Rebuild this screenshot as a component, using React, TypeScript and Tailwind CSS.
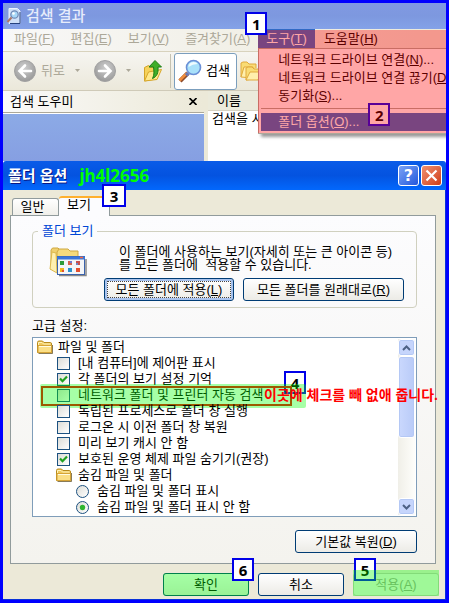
import React from 'react';
import clsx from 'clsx';

interface MenuLabelProps {
  hotkey?: string;
  suffix?: string;
  text: string;
}

interface BadgeProps {
  className: string;
  value: number;
}

interface XpButtonProps {
  children: React.ReactNode;
  className?: string;
  disabled?: boolean;
  focused?: boolean;
}

interface OptionItem {
  checked?: boolean;
  highlight?: boolean;
  text: string;
  type: 'folder' | 'subfolder' | 'checkbox' | 'radio';
}

const disabledMenus = [
  { hotkey: 'F', text: '파일' },
  { hotkey: 'E', text: '편집' },
  { hotkey: 'V', text: '보기' },
  { hotkey: 'A', text: '즐겨찾기' }
];

const toolMenu = [
  { hotkey: 'N', text: '네트워크 드라이브 연결' },
  { hotkey: 'D', text: '네트워크 드라이브 연결 끊기' },
  { hotkey: 'S', text: '동기화' }
];

const options: OptionItem[] = [
  { text: '파일 및 폴더', type: 'folder' },
  { text: '[내 컴퓨터]에 제어판 표시', type: 'checkbox' },
  { checked: true, text: '각 폴더의 보기 설정 기억', type: 'checkbox' },
  { highlight: true, text: '네트워크 폴더 및 프린터 자동 검색', type: 'checkbox' },
  { text: '독립된 프로세스로 폴더 창 실행', type: 'checkbox' },
  { text: '로그온 시 이전 폴더 창 복원', type: 'checkbox' },
  { text: '미리 보기 캐시 안 함', type: 'checkbox' },
  { checked: true, text: '보호된 운영 체제 파일 숨기기(권장)', type: 'checkbox' },
  { text: '숨김 파일 및 폴더', type: 'subfolder' },
  { text: '숨김 파일 및 폴더 표시', type: 'radio' },
  { checked: true, text: '숨김 파일 및 폴더 표시 안 함', type: 'radio' }
];

const MenuLabel = ({ hotkey, suffix = '', text }: MenuLabelProps) => (
  <span>
    {text}
    {hotkey && (
      <>
        (<u>{hotkey}</u>)
      </>
    )}
    {suffix}
  </span>
);

// Numbered step marker
const Badge = ({ className, value }: BadgeProps) => (
  <span
    className={clsx(
      'absolute flex h-[23px] items-center justify-center border-2 border-[#0000e8] bg-white font-["Noto_Sans"] text-[15px] font-bold leading-4 text-black',
      className
    )}
  >
    {value}
  </span>
);

const XpButton = ({ children, className, disabled, focused }: XpButtonProps) => (
  <button
    disabled={disabled}
    className={clsx(
      'relative flex h-[23px] items-center justify-center rounded-[3px] border bg-gradient-to-b whitespace-nowrap',
      disabled
        ? 'border-[#c9c7ba] from-[#f5f4ea] to-[#f5f4ea] text-[#a1a192]'
        : 'border-[#003c74] from-white to-[#ecebe6]',
      focused && 'shadow-[inset_0_0_0_2px_#a9c3ee]',
      className
    )}
  >
    {focused && <span className="absolute inset-[2px] border border-dotted border-[#444]" />}
    {children}
  </button>
);

const FolderIcon = () => (
  <svg className="h-4 w-4 shrink-0" viewBox="0 0 16 16">
    <path d="M1.5 14.5h14V6" fill="none" stroke="#6a5a30" strokeOpacity=".8" />
    <path d="M.5 3.5Q.5 2 2 2h3.5L7 3.5h6.5Q14.5 3.5 14.5 5v8.5H.5z" fill="#f0c95c" stroke="#b88a1c" />
    <path d="M1.500 13V3.500h3.500L6.500 5h7" fill="none" stroke="#fff3b8" />
    <path d="M1 13.500V6.500h13.500v7z" fill="#fbdf86" stroke="#d6a436" />
    <path d="M2 7.500h12" stroke="#fffbe0" />
  </svg>
);

const SearchPageIcon = () => (
  <svg className="h-4 w-4" viewBox="0 0 16 16">
    <path d="M3 .5h8.500L14 3v12.500H3z" fill="#cfe0f8" stroke="#edf3ff" />
    <path d="M14 4v11.500H4" fill="none" stroke="#26427f" />
    <circle cx="8.500" cy="6.500" r="3.700" fill="#a9d8f7" stroke="#7189b5" strokeWidth="1.200" />
    <circle cx="7.500" cy="5.500" r="1.300" fill="#fff" />
    <path d="M5.500 9.500 1.500 14" stroke="#ae7665" strokeWidth="2" />
  </svg>
);

const RoundArrow = ({ flip }: { flip?: boolean }) => (
  <svg className={clsx('h-6 w-6', flip && '-scale-x-100')} viewBox="0 0 24 24">
    <defs>
      <radialGradient id="arrowFill" cx="45%" cy="35%" r="65%">
        <stop offset="0" stopColor="#cfcfcf" />
        <stop offset="1" stopColor="#999" />
      </radialGradient>
    </defs>
    <circle cx="12" cy="12" r="10.500" fill="url(#arrowFill)" stroke="#a2a2a2" />
    <path d="M12 6.500 6.500 12l5.500 5.500M7 12H18" fill="none" stroke="#fff" strokeLinecap="round" strokeWidth="2.600" />
  </svg>
);

const UpFolderIcon = () => (
  <svg className="h-6 w-5" viewBox="0 0 20 24">
    <path d="M1.500 22V8.500l4-2L7.500 8H13v12z" fill="#f6d25a" stroke="#d3a428" />
    <path d="M1.500 22 5.500 13 18.500 10.500 14 20.500z" fill="#ffe98c" stroke="#d7a72b" />
    <path d="M12 1.500 18.500 8H15c.5 6-1 9.500-5.500 11.500C11.500 16 11 12 10.500 8H6z" fill="#3fae2a" stroke="#1d7d14" />
  </svg>
);

const MagnifierIcon = () => (
  <svg className="h-6 w-6" viewBox="0 0 24 24">
    <path d="M10 14 2 22" stroke="#8b4a2b" strokeWidth="4.500" />
    <path d="M9 14 1.500 21.500" stroke="#f08c3c" strokeWidth="2.600" />
    <path d="m8 14 2.500 2.500" stroke="#6778b5" strokeWidth="3" />
    <circle cx="15.500" cy="8.500" r="7" fill="#a9e1fa" stroke="#6a8fd6" strokeWidth="1.600" />
    <path d="M10.500 8q0-4.500 5-5 3 0 4 2-5 0-9 3z" fill="#effbff" />
  </svg>
);

const FoldersIcon = () => (
  <svg className="h-[21px] w-[21px]" viewBox="0 0 21 21">
    <path d="M1 16V2l2-1h4l2 2h7v4" fill="#f9dc75" stroke="#e0a93c" />
    <path d="m1 16 3-10h9l-1 11z" fill="#ffefac" stroke="#e0a93c" />
    <path d="M6 19V7l2-1h4l2 2h6v9z" fill="#f9dc75" stroke="#e0a93c" />
    <path d="m6 19 4-8h11l-3 8z" fill="#ffefac" stroke="#e0a93c" />
  </svg>
);

const FolderViewIcon = () => (
  <svg className="h-8 w-[38px]" viewBox="0 0 38 32">
    <path d="M2 23V3l1.500-2H9l3 3h8v6" fill="#f0d070" stroke="#cfa840" />
    <path d="M8 26V5l2-3h9l2 2h8v7" fill="#f5da7c" stroke="#cfa840" />
    <path d="M1 22 3 5l4 1 1 20z" fill="#fff0b0" stroke="#dcb84e" />
    <path d="M10 28.500h27V12" fill="none" stroke="#555" strokeOpacity=".7" strokeWidth="1.500" />
    <rect x="8.500" y="9.500" width="27" height="18" fill="#f3f5f8" stroke="#3b63ad" />
    <path d="M8 9.500h28v3H8z" fill="#3a76da" />
    <path d="M31 10.500h3" stroke="#f06a45" strokeWidth="1.500" />
    <path d="M11 14h4v4h-4z" fill="#2e9b38" />
    <path d="M19 14h4v4h-4z" fill="#d7634d" />
    <path d="M21 14h2v2h-2z" fill="#6f7bd0" />
    <path d="M27 14h4v4h-4z" fill="#c8504e" />
    <path d="M27 16h2v2h-2z" fill="#7186c4" />
    <path d="M11 21h4v4h-4z" fill="#f2b51f" />
    <path d="M13 23h2v2h-2z" fill="#e4502f" />
    <path d="M19 21h4v4h-4z" fill="#2c91cc" />
    <path d="M27 21h4v4h-4z" fill="#e4502f" />
  </svg>
);

const DownCaret = () => (
  <svg className="h-1 w-[5px]" viewBox="0 0 5 4">
    <path d="M0 0h5L2.500 3z" fill="#aca899" />
  </svg>
);

const ScrollArrow = ({ down }: { down?: boolean }) => (
  <button
    aria-label={down ? '아래로' : '위로'}
    className="flex h-[17px] items-center justify-center rounded-[3px] border border-white bg-[#c6d5fc] shadow-[inset_0_0_0_1px_#b4c8f5]"
  >
    <svg className={clsx('h-[6px] w-[9px]', down && 'rotate-180')} viewBox="0 0 9 6">
      <path d="M1 5 4.500 1.500 8 5" fill="none" stroke="#4d6185" strokeWidth="2" />
    </svg>
  </button>
);

const OptionRow = ({ checked, highlight, text, type }: OptionItem) => {
  if (type === 'folder' || type === 'subfolder') {
    return (
      <li
        className={clsx(
          'flex h-4 items-center leading-4',
          type === 'folder' ? 'gap-[5px] pl-[3px]' : 'gap-[6px] pl-[22px]'
        )}
      >
        <FolderIcon />
        {text}
      </li>
    );
  }
  const isRadio = type === 'radio';
  return (
    <li className="relative h-4 leading-4">
      <label className={clsx('flex h-4 items-center gap-2', isRadio ? 'pl-[42px]' : 'pl-[23px]')}>
        <span className="relative h-[13px] w-[13px] shrink-0">
          <input
            className={clsx(
              'peer block h-[13px] w-[13px] appearance-none border border-[#1c5180] bg-gradient-to-br from-[#dcdcd7] to-white',
              isRadio && 'rounded-full'
            )}
            defaultChecked={checked}
            name={isRadio ? 'hidden-files' : undefined}
            type={type}
          />
          <svg
            className="pointer-events-none absolute inset-0 hidden h-[13px] w-[13px] peer-checked:block"
            viewBox="0 0 13 13"
          >
            {isRadio ? (
              <circle cx="6.500" cy="6.500" r="2.700" fill="#2fb52f" />
            ) : (
              <path d="M3 5.500 5.500 8.200 10 3.500" fill="none" stroke="#21a121" strokeWidth="2.200" />
            )}
          </svg>
        </span>
        {text}
      </label>
      {highlight && (
        <>
          <Badge className="-top-4 left-[250px] w-[22px]" value={4} />
          <span className="pointer-events-none absolute -top-[1px] left-[7px] h-5 w-[251px] border-2 border-[#f00000]" />
          <span className="pointer-events-none absolute -top-[3px] left-[6px] h-6 w-[266px] rounded-[2px] bg-[#00ff00]/35" />
          <span className="absolute top-0 left-[230px] text-sm font-bold leading-4 whitespace-nowrap text-[#ff0000]">
            이곳에 체크를 빼 없애 줍니다.
          </span>
        </>
      )}
    </li>
  );
};

const SearchWindow = () => (
  <section>
    <header className="flex h-[26px] items-center gap-1 bg-gradient-to-b from-[#8199e2] via-[#7d98df] to-[#84a2e8] pl-[3px] text-[15px] font-medium text-[#e6ecfb]">
      <SearchPageIcon />
      <h1>검색 결과</h1>
    </header>

    <nav className="relative flex h-[23px] border-b border-[#d8d2bd] bg-gradient-to-r from-[#f8f8f8] to-[#ece9d8] pl-[3px] text-[#aca899]">
      {disabledMenus.map((menu) => (
        <button
          className="h-[19px] shrink-0 px-2 whitespace-nowrap"
          key={menu.text}
        >
          <MenuLabel {...menu} />
        </button>
      ))}
      <div className="relative flex flex-1 text-black">
        <button className="h-[19px] shrink-0 bg-[#316ac5] px-2 whitespace-nowrap text-white">
          <MenuLabel hotkey="T" text="도구" />
        </button>
        <button className="h-[19px] shrink-0 px-[9px] whitespace-nowrap">
          <MenuLabel hotkey="H" text="도움말" />
        </button>
        {/* open menu */}
        <div className="absolute inset-x-0 top-[19px] z-10 overflow-hidden border-y border-l border-[#aca899] bg-white pt-[2px] pb-[2px] pl-[2px] shadow-[3px_3px_3px_#0006]">
          {toolMenu.map((item) => (
            <button
              className="block h-[18px] pl-[17px] leading-[18px] whitespace-nowrap"
              key={item.text}
            >
              <MenuLabel {...item} suffix="..." />
            </button>
          ))}
          <hr className="mt-[3px] mb-[4px] border-[#aca899]" />
          <button className="block h-[18px] w-full bg-[#316ac5] pl-[17px] text-left leading-[18px] whitespace-nowrap text-white">
            <MenuLabel hotkey="O" suffix="..." text="폴더 옵션" />
          </button>
        </div>
        <Badge className="top-[74px] left-[110px] z-10 w-[22px]" value={2} />
        <span className="pointer-events-none absolute inset-x-0 top-px z-10 h-[103px] bg-[#ff0000]/35" />
        <Badge className="-top-[17px] -left-[13px] z-20 w-[22px]" value={1} />
      </div>
    </nav>

    <div className="flex h-[39px] items-center border-b border-[#cfcab8] bg-gradient-to-b from-[#f6f5f1] to-[#ebe8da] text-[#aca899]">
      <button className="ml-[10px] flex items-center gap-1">
        <RoundArrow />
        뒤로
      </button>
      <span className="ml-[10px]">
        <DownCaret />
      </span>
      <button aria-label="앞으로" className="ml-[13px]">
        <RoundArrow flip />
      </button>
      <span className="ml-[9px]">
        <DownCaret />
      </span>
      <button aria-label="위로" className="ml-3">
        <UpFolderIcon />
      </button>
      <span className="ml-[7px] h-[34px] w-px bg-[#c5c2b2]" />
      <button className="ml-[3px] flex h-[37px] w-[63px] items-center gap-1 rounded-[3px] border border-[#7b9ebd] bg-white pl-[3px] text-black">
        <MagnifierIcon />
        검색
      </button>
      <button aria-label="폴더" className="ml-[3px]">
        <FoldersIcon />
      </button>
    </div>

    <div className="flex h-[70px]">
      <aside className="flex w-[201px] shrink-0 flex-col">
        <div className="flex h-[22px] items-center justify-between border-b border-[#aca899] bg-gradient-to-r from-[#fafafa] to-[#ece9d8] pr-[7px] pl-[7px]">
          <h2>검색 도우미</h2>
          <button aria-label="닫기">
            <svg className="h-[7px] w-[8px]" viewBox="0 0 8 7">
              <path d="m.500 0 7 7M7.500 0l-7 7" stroke="#000" strokeWidth="1.600" />
            </svg>
          </button>
        </div>
        <div className="mt-px flex-1 bg-gradient-to-b from-[#8caae6] to-[#869fe2]" />
      </aside>
      <div className="w-1 bg-[#ece9d8]" />
      <div className="flex-1 bg-white">
        <div className="flex h-5 items-center border-b border-[#d6d2c2] bg-[#ebeadb] pl-[9px]">이름</div>
        <p className="pl-1 leading-4">검색을 시</p>
      </div>
    </div>
  </section>
);

const FolderOptions = () => (
  <section>
    <header className="relative flex h-[29px] items-center rounded-t-[3px] bg-gradient-to-b from-[#0a5be8] via-[#0453e0] to-[#0268fd] pr-1 pl-[5px] text-white">
      <h2 className="text-[15px] font-bold [text-shadow:1px_1px_#0a1883]">폴더 옵션</h2>
      <span className="ml-3 font-['Noto_Sans'] text-[17px] font-bold text-[#00ff00]">jh4l2656</span>
      <div className="ml-auto flex gap-[2px]">
        <button
          aria-label="도움말"
          className="flex h-[21px] w-[21px] items-center justify-center rounded-[3px] border border-white bg-gradient-to-br from-[#7ba2f5] to-[#2456dc] font-['DejaVu_Sans'] text-base font-bold"
        >
          ?
        </button>
        <button
          aria-label="닫기"
          className="flex h-[21px] w-[21px] items-center justify-center rounded-[3px] border border-white bg-gradient-to-br from-[#f0906f] to-[#cf3a10]"
        >
          <svg className="h-[13px] w-[13px]" viewBox="0 0 13 13">
            <path d="m1.500 1.500 10 10M11.500 1.500l-10 10" stroke="#fff" strokeWidth="2.200" />
          </svg>
        </button>
      </div>
      <Badge className="top-[23px] left-[99px] z-10 w-6" value={3} />
    </header>

    <div className="border-r border-b border-[#0831d9] bg-[#ece9d8] pt-[6px] pb-[3px]">
      <div className="ml-[9px] flex h-[19px] items-end" role="tablist">
        <button
          className="h-[17px] w-[47px] rounded-t-[3px] border border-b-0 border-[#919b9c] bg-gradient-to-b from-white to-[#f0efea] pr-[6px] leading-4"
          role="tab"
        >
          일반
        </button>
        <button
          aria-selected
          className="relative -mb-px h-5 w-[51px] rounded-t-[3px] border-t-2 border-r border-[#919b9c] border-t-[#ffb02e] bg-[#fcfcfe] pr-[10px] pb-1 leading-[14px]"
          role="tab"
        >
          보기
        </button>
      </div>

      <div className="mr-[9px] ml-[7px] border border-[#919b9c] bg-gradient-to-b from-[#fcfcfe] to-[#f4f3ee] pt-[7px] pr-[18px] pb-[10px] pl-[21px]">
        <fieldset className="rounded-[4px] border border-[#d0d0bf] pb-[6px] pl-[5px]">
          <legend className="px-1 leading-4 text-[#0046d5]">폴더 보기</legend>
          <div className="flex h-8 items-start">
            <div className="ml-[11px] shrink-0 pt-2">
              <FolderViewIcon />
            </div>
            <p className="ml-8 pt-[6px] leading-[13px] whitespace-nowrap">
              이 폴더에 사용하는 보기(자세히 또는 큰 아이콘 등)
              <br />를 모든 폴더에&nbsp; 적용할 수 있습니다.
            </p>
          </div>
          <div className="mt-[7px] ml-[66px] flex gap-[9px]">
            <XpButton focused className="w-[130px]">
              <MenuLabel hotkey="L" text="모든 폴더에 적용" />
            </XpButton>
            <XpButton className="w-[161px]">
              <MenuLabel hotkey="R" text="모든 폴더를 원래대로" />
            </XpButton>
          </div>
        </fieldset>

        <h3 className="mt-[10px] leading-4">고급 설정:</h3>
        <div className="mt-[3px] flex border border-[#7f9db9] bg-white p-px">
          <ul className="min-w-0 flex-1">
            {options.map((item) => (
              <OptionRow key={item.text} {...item} />
            ))}
          </ul>
          <div className="flex w-[17px] flex-col bg-gradient-to-r from-[#f0efe8] to-[#fefefb]">
            <ScrollArrow />
            <span className="h-[82px] rounded-[3px] border border-white bg-gradient-to-r from-[#cad8fd] to-[#b9cbf8] shadow-[inset_0_0_0_1px_#b4c8f5]" />
            <div className="flex-1" />
            <ScrollArrow down />
          </div>
        </div>

        <XpButton className="mt-[13px] ml-auto w-[122px]">
          <MenuLabel hotkey="D" text="기본값 복원" />
        </XpButton>
      </div>

      <footer className="mt-[9px] flex justify-end gap-[9px] pr-[6px]">
        <div className="relative">
          <XpButton className="w-[86px]">확인</XpButton>
          <span className="pointer-events-none absolute inset-0 rounded-[3px] bg-[#00ff00]/35" />
          <Badge className="-top-[15px] left-[69px] w-[22px]" value={6} />
        </div>
        <XpButton className="w-[86px]">취소</XpButton>
        <div className="relative">
          <XpButton disabled className="w-[86px]">
            <MenuLabel hotkey="A" text="적용" />
          </XpButton>
          <Badge className="-top-[15px] left-px w-[22px]" value={5} />
          <span className="pointer-events-none absolute inset-x-0 -top-[3px] bottom-0 bg-[#00ff00]/35" />
        </div>
      </footer>
    </div>
  </section>
);

const App: React.FC = () => {
  return (
    <main className="overflow-hidden border-[3px] border-[#0000ff] bg-white font-['Liberation_Sans','Noto_Sans_CJK_KR',sans-serif] text-[13px] leading-4 text-black">
      <SearchWindow />
      <FolderOptions />
    </main>
  );
};

export default App;
